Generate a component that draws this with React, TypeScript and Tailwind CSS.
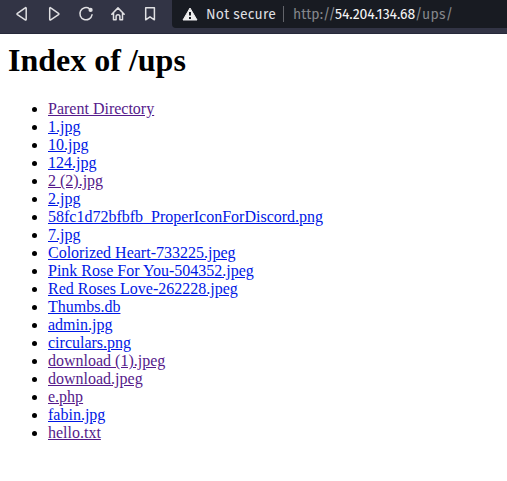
import type { ReactNode } from 'react';

type Entry = { name: string; visited?: boolean };

const entries: Entry[] = [
  { name: 'Parent Directory', visited: true },
  { name: '1.jpg' },
  { name: '10.jpg' },
  { name: '124.jpg' },
  { name: '2 (2).jpg', visited: true },
  { name: '2.jpg' },
  { name: '58fc1d72bfbfb_ProperIconForDiscord.png' },
  { name: '7.jpg' },
  { name: 'Colorized Heart-733225.jpeg' },
  { name: 'Pink Rose For You-504352.jpeg' },
  { name: 'Red Roses Love-262228.jpeg' },
  { name: 'Thumbs.db' },
  { name: 'admin.jpg' },
  { name: 'circulars.png' },
  { name: 'download (1).jpeg', visited: true },
  { name: 'download.jpeg', visited: true },
  { name: 'e.php', visited: true },
  { name: 'fabin.jpg' },
  { name: 'hello.txt', visited: true },
];

function ToolButton({ label, children }: { label: string; children: ReactNode }) {
  return (
    <button aria-label={label} className="flex h-7 w-8 shrink-0 items-center justify-center">
      <svg
        viewBox="0 0 16 16"
        className="size-4 fill-none stroke-[#e0e0e3] stroke-[1.5]"
        strokeLinejoin="round"
        strokeLinecap="round"
      >
        {children}
      </svg>
    </button>
  );
}

function Toolbar() {
  return (
    <header className="flex h-[34px] items-start border-b border-[#26293a] bg-[#323445] pl-1.5">
      <nav className="flex w-[166px] shrink-0">
        <ToolButton label="Back">
          <path d="M12.2 2.2V13.3c0 .7-.5 .9-1 .5L3.4 8.6c-.5-.4-.5-.9 0-1.3L11.2 1.8c.5-.4 1-.2 1 .4Z" />
        </ToolButton>
        <ToolButton label="Forward">
          <path d="M3.7 2.2V13.3c0 .7.5 .9 1 .5L12.5 8.6c.5-.4.5-.9 0-1.3L4.7 1.8c-.5-.4-1-.2-1 .4Z" />
        </ToolButton>
        <ToolButton label="Reload">
          <path d="M11.6 2.8A6.1 6.1 0 1 0 14 8.8" />
          <circle cx="12.6" cy="3.9" r="2.1" className="fill-[#e0e0e3] stroke-none" />
        </ToolButton>
        <ToolButton label="Home">
          <path d="M1.8 8.2 8 1.9l6.2 6.3M3.5 7v6.8h2.6v-3.2a1.9 1.9 0 0 1 3.8 0v3.2h2.6V7" />
        </ToolButton>
        <ToolButton label="Bookmark">
          <path d="M3.7 1.8h8.7v12L8 10.8l-4.3 3z" />
        </ToolButton>
      </nav>
      <div className="flex h-7 min-w-0 grow items-center rounded-bl bg-[#181b22] pl-2.5 font-['Fira_Sans','Noto_Sans',sans-serif] text-[14px] leading-7 whitespace-pre">
        <svg viewBox="0 0 16 14" className="mr-2 h-3.5 w-4 shrink-0">
          <path d="M8 1 15 13H1Z" className="fill-[#eeeeef] stroke-[#eeeeef]" strokeLinejoin="round" />
          <path d="M8 5v3.6M8 10v2" className="stroke-[#181b22] stroke-2" />
        </svg>
        <span className="w-[77px] shrink-0 pt-0.5 tracking-[0.2px] text-[#dedfe1]">Not secure</span>
        <span className="mr-[9px] h-4 w-px shrink-0 bg-[#62646a]" />
        <span className="w-[42px] shrink-0 pt-0.5 text-[#85878c]">http://</span>
        <span className="w-[80px] shrink-0 pt-0.5 tracking-[-0.05px] text-[#f5f5f6]">54.204.134.68</span>
        <span className="pt-0.5 tracking-[0.2px] text-[#85878c]">/ups/</span>
      </div>
    </header>
  );
}

export default function App() {
  return (
    <div className="min-h-screen bg-white font-['Liberation_Serif',serif] text-black">
      <Toolbar />
      <main className="px-2 pt-2">
        <h1 className="text-[32px] leading-9 font-bold">Index of /ups</h1>
        <ul className="mt-[22px] list-disc pl-10 text-base leading-[18px]">
          {entries.map((entry) => (
            <li key={entry.name}>
              <a href="#" className={entry.visited ? 'text-[#551a8b] underline' : 'text-[#0018e5] underline'}>
                {entry.name}
              </a>
            </li>
          ))}
        </ul>
      </main>
    </div>
  );
}
